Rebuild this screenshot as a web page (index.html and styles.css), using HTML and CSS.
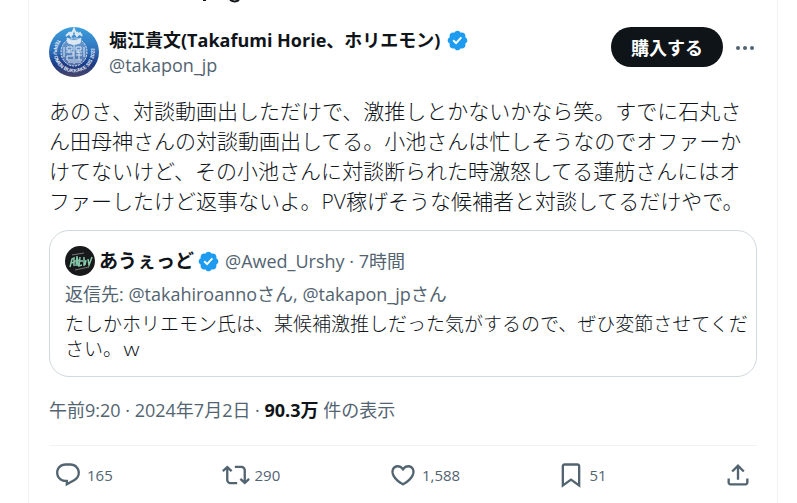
FILE: index.html
```html
<!DOCTYPE html>
<html lang="ja">
<head>
<meta charset="utf-8">
<meta name="viewport" content="width=device-width, initial-scale=1">
<title>ポスト</title>
<link rel="stylesheet" href="styles.css">
</head>
<body>
<main class="column">
  <svg class="clipped-title" viewBox="0 0 40 4" aria-hidden="true"><path d="M0 0h3v1H0z"/><path d="M27 0q5 3 9 0" fill="none" stroke="#0f1419" stroke-width="2"/></svg>
  <article class="post">
    <header class="post-header">
      <svg class="avatar" viewBox="0 0 50 50" aria-hidden="true">
        <defs>
          <linearGradient id="sky" x1="0" y1="0" x2="0" y2="1"><stop offset="0" stop-color="#3da0dc"/><stop offset=".45" stop-color="#2f72bd"/><stop offset=".75" stop-color="#1b3a86"/><stop offset="1" stop-color="#4b4668"/></linearGradient>
          <path id="ring" d="M9 12a20.500 20.500 0 1 0 32 0"/>
        </defs>
        <circle cx="25" cy="25" r="25" fill="url(#sky)"/>
        <text class="ring-text"><textPath href="#ring">TEPPU OMEN BUKKAKE SIS 2022</textPath></text>
        <g fill="none" stroke="#dbe7f2" stroke-width="1">
          <ellipse cx="25" cy="25" rx="13" ry="14" fill="#8fa9d0" fill-opacity=".5" stroke-dasharray="2 1"/>
          <path d="M18 11q7 5 14 0l-1 5q-6 3-12 0z" fill="#dbe7f2"/>
          <path d="M17 9l3-3 2 3 3-7 3 7 3-3 2 3M21 5l3 3M29 5l-3 3" stroke-width="2"/>
          <path d="M18 20h5v3h-5zm9 0h5v3h-5zM17 25h7v4h-6v4h6m3-8h6m-6 3h6m-3-3v8m-4 0h7M19 35h5m2 0h6M25 18v19M20 23v3m9-3v3M15 20v10m20-10v10"/>
        </g>
      </svg>
      <div class="author">
        <div class="author-name"><strong>堀江貴文(Takafumi Horie、ホリエモン)</strong><svg class="verified" viewBox="0 0 24 24" role="img" aria-label="認証済み"><path d="M22.250 12c0-1.430-.88-2.670-2.190-3.340.46-1.390.2-2.900-.81-3.910s-2.520-1.270-3.910-.81c-.66-1.310-1.910-2.190-3.340-2.190s-2.670.88-3.330 2.190c-1.400-.46-2.910-.2-3.920.81s-1.260 2.520-.8 3.910c-1.310.67-2.200 1.910-2.200 3.340s.89 2.670 2.200 3.340c-.46 1.390-.21 2.900.8 3.910s2.520 1.260 3.910.81c.67 1.310 1.910 2.190 3.340 2.190s2.680-.88 3.340-2.190c1.390.45 2.900.2 3.910-.81s1.270-2.520.81-3.910c1.310-.67 2.190-1.910 2.190-3.340zm-11.710 4.200L6.800 12.460l1.410-1.420 2.260 2.260 4.800-5.230 1.470 1.360-6.200 6.770z"/></svg></div>
        <a class="handle" href="#">@takapon_jp</a>
      </div>
      <button class="subscribe" type="button">購入する</button>
      <button class="more" type="button" aria-label="もっと見る"><svg viewBox="0 0 24 24"><circle cx="5" cy="12" r="2"/><circle cx="12" cy="12" r="2"/><circle cx="19" cy="12" r="2"/></svg></button>
    </header>

    <p class="post-text">あのさ、対談動画出しただけで、激推しとかないかなら笑。すでに石丸さん田母神さんの対談動画出してる。小池さんは忙しそうなのでオファーかけてないけど、その小池さんに対談断られた時激怒してる蓮舫さんにはオファーしたけど返事ないよ。PV稼げそうな候補者と対談してるだけやで。</p>

    <section class="quote">
      <div class="quote-header">
        <svg class="quote-avatar" viewBox="0 0 30 30" aria-hidden="true"><circle cx="15" cy="15" r="15" fill="#17191b"/><path d="M5 21l2-8 2-1v8m-3-3l4-1m1 4l1-10 1 10m-3-5l5-1m0-3l-1 9 3-1m-2-4h3m1-4v9m2-6l-1 5m3-6l1 6 3-8" fill="none" stroke="#85c9aa" stroke-width="1.500"/><path d="M7 9l12-2M10 24l14-3" stroke="#777" stroke-width="1"/></svg>
        <strong>あうぇっど</strong>
        <svg class="verified" viewBox="0 0 24 24" role="img" aria-label="認証済み"><path d="M22.250 12c0-1.430-.88-2.670-2.190-3.340.46-1.390.2-2.900-.81-3.910s-2.520-1.270-3.910-.81c-.66-1.310-1.910-2.190-3.340-2.190s-2.670.88-3.330 2.190c-1.400-.46-2.910-.2-3.920.81s-1.260 2.520-.8 3.910c-1.310.67-2.200 1.910-2.200 3.340s.89 2.670 2.200 3.340c-.46 1.390-.21 2.900.8 3.910s2.520 1.260 3.910.81c.67 1.310 1.910 2.190 3.340 2.190s2.680-.88 3.340-2.190c1.390.45 2.900.2 3.910-.81s1.270-2.520.81-3.910c1.310-.67 2.190-1.910 2.190-3.340zm-11.710 4.200L6.800 12.460l1.410-1.420 2.260 2.260 4.800-5.230 1.470 1.360-6.200 6.770z"/></svg>
        <span class="quote-meta">@Awed_Urshy · 7時間</span>
      </div>
      <p class="reply-to">返信先: @takahiroannoさん, @takapon_jpさん</p>
      <p class="quote-text">たしかホリエモン氏は、某候補激推しだった気がするので、ぜひ変節させてください。ｗ</p>
    </section>

    <p class="post-meta">午前9:20 · 2024年7月2日 · <strong>90.3万</strong> 件の表示</p>

    <footer class="actions">
      <button class="action" type="button" aria-label="返信 165"><svg viewBox="0 0 24 24"><path d="M1.751 10c0-4.420 3.584-8 8.005-8h4.366c4.490 0 8.129 3.640 8.129 8.130 0 2.960-1.607 5.680-4.196 7.110l-8.054 4.460v-3.690h-.067c-4.490.1-8.183-3.510-8.183-8.010zm8.005-6c-3.317 0-6.005 2.690-6.005 6 0 3.370 2.770 6.080 6.138 6.010l.351-.01h1.761v2.300l5.087-2.810c1.951-1.080 3.163-3.130 3.163-5.360 0-3.390-2.744-6.130-6.129-6.130H9.756z"/></svg><span>165</span></button>
      <button class="action" type="button" aria-label="リポスト 290"><svg viewBox="0 0 24 24"><path d="M4.500 3.880l4.432 4.140-1.364 1.460L5.500 7.550V16c0 1.100.896 2 2 2H13v2H7.500c-2.209 0-4-1.790-4-4V7.550L1.432 9.480.068 8.020 4.500 3.880zM16.500 6H11V4h5.500c2.209 0 4 1.790 4 4v8.450l2.068-1.930 1.364 1.460-4.432 4.140-4.432-4.140 1.364-1.460 2.068 1.930V8c0-1.100-.896-2-2-2z"/></svg><span>290</span></button>
      <button class="action" type="button" aria-label="いいね 1,588"><svg viewBox="0 0 24 24"><path d="M16.697 5.500c-1.222-.06-2.679.51-3.890 2.160l-.805 1.090-.806-1.090C9.984 6.010 8.526 5.440 7.304 5.500c-1.243.07-2.349.78-2.910 1.910-.552 1.120-.633 2.780.479 4.820 1.074 1.970 3.257 4.270 7.129 6.610 3.870-2.340 6.052-4.640 7.126-6.610 1.111-2.040 1.030-3.700.477-4.820-.561-1.130-1.666-1.840-2.908-1.910zm4.187 7.690c-1.351 2.480-4.001 5.120-8.379 7.670l-.503.3-.504-.3c-4.379-2.550-7.029-5.190-8.382-7.670-1.360-2.500-1.410-4.860-.514-6.670.887-1.790 2.647-2.910 4.601-3.010 1.651-.09 3.368.56 4.798 2.010 1.429-1.450 3.146-2.100 4.796-2.010 1.954.1 3.714 1.220 4.601 3.010.896 1.810.846 4.170-.514 6.670z"/></svg><span>1,588</span></button>
      <button class="action" type="button" aria-label="ブックマーク 51"><svg viewBox="0 0 24 24"><path d="M4 4.500C4 3.120 5.119 2 6.500 2h11C18.881 2 20 3.120 20 4.500v18.440l-8-5.710-8 5.710V4.500zM6.500 4c-.276 0-.5.22-.5.5v14.560l6-4.290 6 4.290V4.500c0-.28-.224-.5-.5-.5h-11z"/></svg><span>51</span></button>
      <button class="action share" type="button" aria-label="共有"><svg viewBox="0 0 24 24"><path d="M12 2.590l5.700 5.700-1.410 1.420L13 6.410V16h-2V6.410l-3.300 3.300-1.410-1.420L12 2.590zM21 15l-.02 3.510c0 1.380-1.120 2.490-2.500 2.490H5.500C4.110 21 3 19.880 3 18.500V15h2v3.500c0 .28.22.5.5.5h12.980c.28 0 .5-.22.5-.5L19 15h2z"/></svg></button>
    </footer>
  </article>
</main>
</body>
</html>
```
FILE: styles.css
```css
* { box-sizing: border-box; }

body {
  margin: 0;
  overflow: hidden;
  background: #fff;
  color: #0f1419;
  font-family: "Open Sans", "Noto Sans CJK JP", sans-serif;
  font-size: 18px;
}

p { margin: 0; }
svg { display: block; flex: none; }
button {
  border: 0;
  padding: 0;
  background: none;
  font: inherit;
  color: inherit;
}

.column {
  min-height: 100vh;
  margin: 0 19px 0 28px;
  padding: 0 20px;
  border: solid #eff3f4;
  border-width: 0 1px;
}

.clipped-title {
  width: 40px;
  height: 4px;
  margin-left: 154px;
  fill: #0f1419;
}

.post-header {
  display: flex;
  align-items: center;
  margin-top: 22px;
}

.avatar { width: 50px; height: 50px; overflow: visible; }
.ring-text {
  font: bold 5px "Liberation Sans", sans-serif;
  fill: #e6edf6;
}

.author {
  flex: 1;
  min-width: 0;
  margin-left: 10px;
  padding-top: 2px;
  line-height: 25px;
}
.author-name { display: flex; align-items: center; gap: 6px; }
.handle { color: #536471; text-decoration: none; }

.verified { width: 23px; height: 23px; fill: #1d9bf0; }

.subscribe {
  height: 40px;
  padding: 0 20px;
  margin: -10px 0 0;
  border-radius: 20px;
  background: #0f1419;
  color: #fff;
  font-weight: 700;
}
.more { margin: -8px 0 0 10px; }
.more svg { width: 24px; height: 24px; fill: #536471; }

.post-text {
  margin-top: 18px;
  font-size: 21px;
  font-weight: 300;
  line-height: 30px;
}

.quote {
  margin-top: 14px;
  padding: 15px 6px 14px 15px;
  border: 1px solid #cfd9de;
  border-radius: 20px;
}
.quote-header {
  display: flex;
  align-items: center;
  gap: 3px;
  line-height: 30px;
}
.quote-avatar { width: 30px; height: 30px; margin-right: 1px; }
.quote-header strong { font-size: 19px; }
.quote-meta { margin-left: 2px; }
.quote-meta, .reply-to { color: #536471; }
.reply-to { margin-top: 6px; line-height: 25px; }
.quote-text {
  margin-top: 5px;
  font-size: 19px;
  font-weight: 300;
  line-height: 25px;
}

.post-meta {
  margin-top: 20px;
  line-height: 26px;
  color: #536471;
}
.post-meta strong { color: #0f1419; }

.actions {
  display: flex;
  margin-top: 22px;
  padding: 15px 5px;
  border-top: 1px solid #eff3f4;
  color: #536471;
  font-size: 15px;
}
.action {
  display: flex;
  flex: 1;
  align-items: center;
  gap: 5px;
  line-height: 28px;
}
.action svg { width: 28px; height: 28px; fill: currentColor; }
.share { flex: none; }
```
